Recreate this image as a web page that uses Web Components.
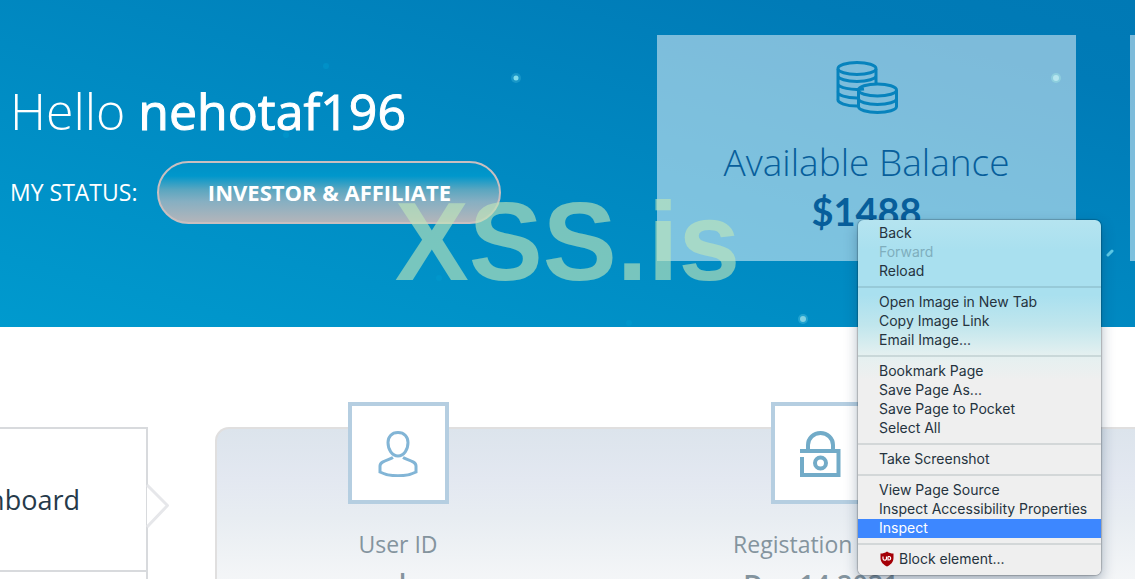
<!DOCTYPE html>
<html lang="en">
<head>
<meta charset="utf-8">
<title>Account dashboard</title>
<style>
html, body { margin: 0; height: 100%; }
body { overflow: hidden; background: #fff; font-family: "Open Sans", sans-serif; }
</style>
</head>
<body>
<app-page>
  <hero-banner>
    <user-greeting name="nehotaf196" status="INVESTOR &amp; AFFILIATE"></user-greeting>
    <balance-card label="Available Balance" amount="$1488"></balance-card>
    <balance-card></balance-card>
  </hero-banner>
  <main-area>
    <side-nav slot="nav"></side-nav>
    <info-panel>
      <info-tile label="User ID" value="d">
        <svg width="45" height="48" viewBox="0 -1 45 48" fill="none" stroke="#82b5d6" stroke-width="3"><path d="M22 2.500C15.500 2.500 12 7 12 12.500C12 19.500 16 26 22 26S32 19.500 32 12.500C32 7 28.500 2.500 22 2.500Z"/><path d="M17 27.500C13 30 4 31 4 36V42C13 47 31 47 40 42V36C40 31 31 30 27 27.500"/></svg>
      </info-tile>
      <info-tile label="Registation Date" value="Dec 14 2021">
        <svg width="45" height="48" viewBox="1 0 45 48" fill="none" stroke="#72abc8" stroke-width="4"><path d="M10 21V16a12.500 12 0 0 1 25 0v5"/><path d="M2 22H40.500V46H4V28"/><circle cx="22.500" cy="34" r="5.500"/></svg>
      </info-tile>
    </info-panel>
  </main-area>
  <water-mark slot="over">XSS.is</water-mark>
  <context-menu slot="over">
    <menu-item>Back</menu-item>
    <menu-item disabled>Forward</menu-item>
    <menu-item>Reload</menu-item>
    <menu-line></menu-line>
    <menu-item>Open Image in New Tab</menu-item>
    <menu-item>Copy Image Link</menu-item>
    <menu-item>Email Image...</menu-item>
    <menu-line></menu-line>
    <menu-item>Bookmark Page</menu-item>
    <menu-item>Save Page As...</menu-item>
    <menu-item>Save Page to Pocket</menu-item>
    <menu-item>Select All</menu-item>
    <menu-line></menu-line>
    <menu-item>Take Screenshot</menu-item>
    <menu-line></menu-line>
    <menu-item>View Page Source</menu-item>
    <menu-item>Inspect Accessibility Properties</menu-item>
    <menu-item active>Inspect</menu-item>
    <menu-line></menu-line>
    <menu-item><svg slot="icon" width="16" height="16" viewBox="0 0 16 16"><path d="M8 0.500C10 2 12 2.500 14.500 2.500V7C14.500 11.500 11 14 8 15.500C5 14 1.500 11.500 1.500 7V2.500C4 2.500 6 2 8 0.500Z" fill="#a40007"/><path d="M4 5.500V7.500A1.700 1.700 0 0 0 7.500 7.500V5.500M9 5.500V9H10.300A1.800 1.800 0 0 0 10.300 5.500H9" fill="none" stroke="#fff" stroke-width="1.200"/></svg>Block element...</menu-item>
  </context-menu>
</app-page>
<script>
function define(name, render) {
  customElements.define(name, class extends HTMLElement {
    constructor() {
      super();
      this.attachShadow({ mode: "open" }).innerHTML = render(this);
    }
  });
}
const attr = (el, key) => (el.getAttribute(key) || "").replace(/&/g, "&amp;");

define("app-page", () => `
  <style>
    :host { display: block; position: relative; height: 100%; overflow: hidden; }
  </style>
  <slot></slot><slot name="over"></slot>`);

define("hero-banner", () => `
  <style>
    :host {
      display: grid; grid-template-columns: minmax(0, 1fr) 419px 5px; column-gap: 54px;
      box-sizing: border-box; height: 327px; padding: 35px 0 66px 10px; position: relative; overflow: hidden;
      background: linear-gradient(15deg, #009ace 0%, #008ac2 45%, #007bb7 85%, #0079b5 100%);
    }
    svg { position: absolute; inset: 0; width: 100%; height: 100%; pointer-events: none; }
  </style>
  <slot></slot>
  <svg aria-hidden="true">
    <g fill="#4fc4e0"><circle cx="516" cy="78" r="5" opacity=".3"/><circle cx="516" cy="78" r="2.500" fill="#7fdcec"/>
    <circle cx="803" cy="319" r="5" opacity=".4"/><circle cx="803" cy="319" r="3" fill="#7fd0e2"/>
    <circle cx="1056" cy="78" r="5" fill="#94d6e0" opacity=".7"/><circle cx="1056" cy="78" r="3" fill="#b5e6ef"/></g>
    <g fill="#009bd0" opacity=".5"><circle cx="326" cy="66" r="3"/><circle cx="439" cy="278" r="3"/><circle cx="629" cy="323" r="3"/><circle cx="286" cy="135" r="3"/></g>
    <path d="M1108 255L1112 251" stroke="#5ecbe8" stroke-width="3" stroke-linecap="round"/>
  </svg>`);

define("user-greeting", el => `
  <style>
    :host { display: block; color: #fff; padding-top: 42px; white-space: nowrap; }
    h1 { margin: 0; font-size: 50px; line-height: 68px; font-weight: 300; }
    strong { font-weight: 500; -webkit-text-stroke: 1px currentColor; }
    .row { display: flex; align-items: center; gap: 20px; margin-top: 16px; font-size: 23px; line-height: 30px; font-weight: 500; }
    .row span { padding-bottom: 2px; }
    button {
      box-sizing: border-box; width: 344px; height: 63px; border: 2px solid #c9bfc0; border-radius: 32px; padding: 0 0 2px;
      color: #fff; font: 700 22px "Open Sans", sans-serif;
      background: linear-gradient(#0090c6 0%, #0097cb 22%, #5aa6c0 45%, #86afc2 65%, #b3b5ba 100%);
    }
  </style>
  <h1>Hello <strong>${attr(el, "name")}</strong></h1>
  <div class="row"><span>MY STATUS:</span><button type="button">${attr(el, "status")}</button></div>`);

define("balance-card", el => `
  <style>
    :host { display: flex; flex-direction: column; align-items: center; box-sizing: border-box; padding-top: 26px; background: rgba(255,255,255,.49); color: #075e9b; white-space: nowrap; overflow: hidden; }
    .label { margin-top: 20px; font-size: 37px; line-height: 54px; font-weight: 350; }
    .amount { font-size: 38px; line-height: 44px; font-weight: 700; font-family: Lato, sans-serif; }
  </style>
  ${el.hasAttribute("label") ? `
  <svg width="62" height="54" viewBox="0 0 62 54" fill="none" stroke="#0783bd" stroke-width="3">
    <ellipse cx="21" cy="7.500" rx="19" ry="6"/>
    <path d="M2 8V38A19 6.500 0 0 0 22 45M40 8V22M2 14.500A19 6 0 0 0 40 14.500M2 22.500A19 6 0 0 0 28 28M2 30.500A19 6 0 0 0 22 37"/>
    <ellipse cx="41.500" cy="29" rx="19" ry="6"/>
    <path d="M22.500 29V45.500A19 6 0 0 0 60.500 45.500V29M22.500 37.500A19 6 0 0 0 60.500 37.500"/>
  </svg>
  <div class="label">${attr(el, "label")}</div>
  <div class="amount">${attr(el, "amount")}</div>` : ""}`);

define("main-area", () => `
  <style>
    :host { display: grid; grid-template-columns: 169px minmax(0, 1fr); column-gap: 46px; padding-top: 100px; }
  </style>
  <slot name="nav"></slot><slot></slot>`);

define("side-nav", () => `
  <style>
    :host { display: block; position: relative; }
    nav { margin-right: 21px; border: solid #d8dadd; border-width: 2px 2px 0 0; }
    a { display: flex; justify-content: flex-end; align-items: center; height: 141px; padding-right: 66px; border-bottom: 2px solid #d8dadd; color: #263a4a; font-size: 27px; font-weight: 500; text-decoration: none; }
    a + a { border: 0; }
    svg { position: absolute; right: 0; top: 57px; }
  </style>
  <nav><a href="#dashboard">Dashboard</a><a href="#more" aria-label="More"></a></nav>
  <svg width="24" height="44" viewBox="0 0 24 44" aria-hidden="true"><path d="M2 1L22.500 21.500L2 43" fill="#fff" stroke="#e6e7ea" stroke-width="3"/></svg>`);

define("info-panel", () => `
  <style>
    :host {
      display: grid; grid-template-columns: 1fr 1fr; column-gap: 63px; box-sizing: border-box; height: 200px; padding: 0 134px 0 1px;
      border: solid #e0dfdf; border-width: 2px 0 0 2px; border-radius: 14px 0 0 0;
      background: linear-gradient(#dce4ec 0, #e3e8f1 50px, #e8edf2 90px, #f3f5f7 145px, #fafafa 200px);
    }
  </style>
  <slot></slot>`);

define("info-tile", el => `
  <style>
    :host { display: flex; flex-direction: column; align-items: center; margin-top: -27px; color: #84949e; white-space: nowrap; }
    .icon { display: flex; align-items: center; justify-content: center; box-sizing: border-box; width: 101px; height: 102px; border: 4px solid #b5cee1; background: #fff; }
    .label { margin-top: 24px; font-size: 23px; line-height: 32px; font-weight: 500; }
    .value { margin-top: 6px; font-size: 27px; line-height: 36px; font-weight: 600; }
  </style>
  <div class="icon"><slot></slot></div>
  <div class="label">${attr(el, "label")}</div>
  <div class="value">${attr(el, "value")}</div>`);

define("water-mark", () => `
  <style>
    :host { display: block; position: absolute; top: 180px; left: 0; right: 0; text-align: center; pointer-events: none;
      font: 700 111px/124px "Liberation Sans", Arial, sans-serif; color: rgba(190,229,185,.63); }
  </style>
  <slot></slot>`);

define("context-menu", () => `
  <style>
    :host { display: block; position: absolute; top: 220px; right: 34px; width: 243px; box-sizing: border-box; padding: 4px 0 6px; border-radius: 6px;
      background: linear-gradient(#b5e4f0 0, #a9e0ef 30px, #a9e0ef 75px, #c0e6ed 105px, #e4f0f0 135px, #efefef 160px);
      box-shadow: 0 0 1px 1px rgba(0,0,0,.2), 0 6px 14px rgba(20,50,80,.35); }
  </style>
  <slot></slot>`);

define("menu-item", el => `
  <style>
    :host { display: block; }
    button { display: flex; align-items: center; gap: 4px; width: 100%; height: 19px; margin: 0; padding: 0 0 2px 21px; border: 0; background: none; color: #25333e; font: 14px/17px Inter, sans-serif; white-space: nowrap; }
    button:disabled { color: #7faebd; }
    :host([active]) button { background: #3d87ff; color: #fff; }
  </style>
  <button type="button" ${el.hasAttribute("disabled") ? "disabled" : ""}><slot name="icon"></slot><span><slot></slot></span></button>`);

define("menu-line", () => `
  <style>
    :host { display: block; height: 2px; margin: 5px 0; background: rgba(40,70,80,.14); }
  </style>`);
</script>
</body>
</html>
